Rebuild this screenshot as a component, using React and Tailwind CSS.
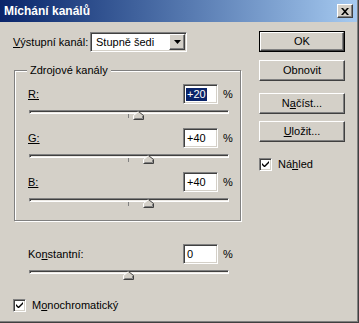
import React from 'react';

const raised =
  'border border-t-white border-l-white border-r-[#404040] border-b-[#404040] shadow-[inset_-1px_-1px_0_#808080,inset_1px_1px_0_#d4d0c8]';
const sunken =
  'border border-t-[#808080] border-l-[#808080] border-r-white border-b-white shadow-[inset_1px_1px_0_#404040,inset_-1px_-1px_0_#d4d0c8]';

function Thumb() {
  return (
    <svg width="11" height="9" viewBox="0 0 11 9" className="block">
      <polygon points="0.5,4.5 5.5,0.5 10.5,4.5 10.5,8.5 0.5,8.5" fill="#d4d0c8" />
      <polyline points="0.5,8.5 0.5,4.5 5.5,0.5" fill="none" stroke="#ffffff" />
      <polyline points="5.5,0.5 10.5,4.5 10.5,8.5 0.5,8.5" fill="none" stroke="#404040" />
      <polyline points="9.5,5 9.5,7.5 1.5,7.5" fill="none" stroke="#808080" />
    </svg>
  );
}

function Slider({ value }) {
  // 0 sits at the middle tick; 1 % = half a pixel
  const center = 99 + value / 2;
  return (
    <div className="relative h-[12px] w-[200px]">
      <div className="mt-[4px] h-[4px] border border-t-[#808080] border-l-[#808080] border-r-white border-b-white bg-[#ece9e4] shadow-[inset_1px_1px_0_#404040]" />
      <div className="absolute left-[99px] top-[4px] h-[4px] w-px bg-[#808080]" />
      <div className="absolute top-[1px]" style={{ left: center - 5 }}>
        <Thumb />
      </div>
    </div>
  );
}

function Field({ value, selected }) {
  return (
    <div className={`flex h-[20px] w-[35px] items-center bg-white pl-[2px] ${sunken}`}>
      {selected ? (
        <span className="bg-[#0a246a] px-px text-white">{value}</span>
      ) : (
        <span className="px-px">{value}</span>
      )}
    </div>
  );
}

function ChannelRow({ label, value, selected }) {
  return (
    <>
      <div className="flex h-[20px] items-center">
        <div className="w-[155px]">{label}</div>
        <Field value={value} selected={selected} />
        <div className="ml-[5px]">%</div>
      </div>
      <div className="mt-[6px] ml-px">
        <Slider value={value === '0' ? 0 : parseInt(value, 10)} />
      </div>
    </>
  );
}

function Checkbox() {
  return (
    <div className={`flex h-[13px] w-[13px] items-center justify-center bg-white ${sunken}`}>
      <svg width="7" height="7" viewBox="0 0 7 7">
        <path d="M0 2v2l2 2h1l4-4V0L2.5 4.5z" fill="#000" />
      </svg>
    </div>
  );
}

function Button({ children, isDefault, className = '' }) {
  if (isDefault) {
    return (
      <div className={`h-[21px] w-[86px] border border-black ${className}`}>
        <div className={`flex h-full items-center justify-center ${raised}`}>{children}</div>
      </div>
    );
  }
  return (
    <div className={`flex h-[21px] w-[86px] items-center justify-center ${raised} ${className}`}>
      {children}
    </div>
  );
}

export default function App() {
  return (
    <div className="h-[323px] w-[359px] border-r border-b border-[#404040] bg-[#d4d0c8] font-['Liberation_Sans',Arial,sans-serif] text-[11px] leading-[13px] text-black">
      <div className="flex h-full flex-col border-r border-b border-[#808080]">
        <div className="flex h-[22px] items-center bg-gradient-to-r from-[#0a246a] to-[#a6caf0] pr-[4px] pl-[4px]">
          <div className="flex-1 text-[12px] font-bold text-white">Míchání kanálů</div>
          <div className={`flex h-[14px] w-[16px] items-center justify-center bg-[#d4d0c8] ${raised}`}>
            <svg width="8" height="7" viewBox="0 0 8 7">
              <path d="M0 0h2l2 2.2L6 0h2L5 3.5 8 7H6L4 4.8 2 7H0l3-3.5z" fill="#000" />
            </svg>
          </div>
        </div>

        <div className="flex flex-1 pl-[13px]">
          <div className="w-[228px]">
            <div className="mt-[10px] flex h-[20px] items-center">
              <div className="w-[77px]">
                <span className="underline">V</span>ýstupní kanál:
              </div>
              <div className={`flex h-[20px] w-[97px] items-center bg-white ${sunken}`}>
                <div className="flex-1 pl-[5px]">Stupně šedi</div>
                <div className={`mr-px flex h-[16px] w-[16px] items-center justify-center bg-[#d4d0c8] ${raised}`}>
                  <svg width="7" height="4" viewBox="0 0 7 4">
                    <path d="M0 0h7L3.5 4z" fill="#000" />
                  </svg>
                </div>
              </div>
            </div>

            <div className="mt-[18px] ml-px h-[151px] w-[227px] border border-[#808080] shadow-[inset_1px_1px_0_white,1px_1px_0_white]">
              <div className="-mt-[7px] ml-[12px] h-[13px] w-fit bg-[#d4d0c8] px-[3px]">Zdrojové kanály</div>
              <div className="mt-[7px] pl-[13px]">
                <ChannelRow label={<span className="underline">R:</span>} value="+20" selected />
                <div className="mt-[6px]" />
                <ChannelRow label={<span className="underline">G:</span>} value="+40" />
                <div className="mt-[6px]" />
                <ChannelRow label={<span className="underline">B:</span>} value="+40" />
              </div>
            </div>

            <div className="mt-[23px] pl-[15px]">
              <ChannelRow
                label={
                  <span>
                    Ko<span className="underline">n</span>stantní:
                  </span>
                }
                value="0"
              />
            </div>

            <div className="mt-[17px] flex items-center">
              <Checkbox />
              <div className="ml-[6px]">
                M<span className="underline">o</span>nochromatický
              </div>
            </div>
          </div>

          <div className="ml-[18px] flex w-[86px] flex-col pt-[9px]">
            <Button isDefault>OK</Button>
            <Button className="mt-[8px]">Obnovit</Button>
            <Button className="mt-[12px]">
              <span>
                N<span className="underline">a</span>číst...
              </span>
            </Button>
            <Button className="mt-[7px]">
              <span>
                <span className="underline">U</span>ložit...
              </span>
            </Button>
            <div className="mt-[16px] flex items-center">
              <Checkbox />
              <div className="ml-[6px]">
                Ná<span className="underline">h</span>led
              </div>
            </div>
          </div>
        </div>
      </div>
    </div>
  );
}
